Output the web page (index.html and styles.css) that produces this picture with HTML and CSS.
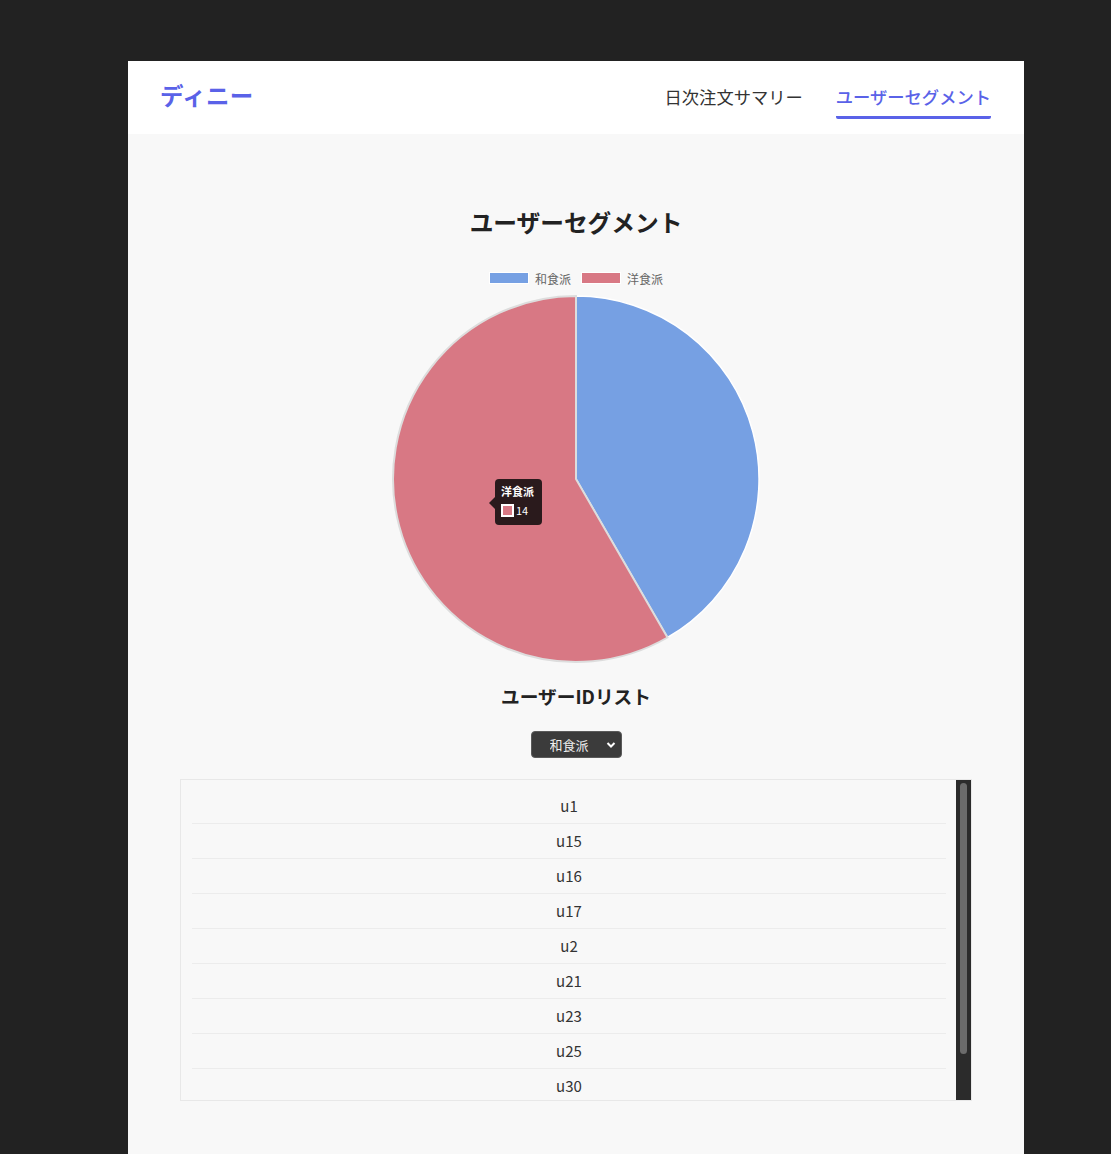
FILE: index.html
```html
<!DOCTYPE html>
<html lang="ja">
<head>
<meta charset="utf-8">
<title>ディニー - ユーザーセグメント</title>
<link rel="stylesheet" href="styles.css">
</head>
<body>
<div class="app">
  <header class="header">
    <div class="logo">ディニー</div>
    <nav class="nav">
      <a class="nav-item">日次注文サマリー</a>
      <a class="nav-item active">ユーザーセグメント</a>
    </nav>
  </header>
  <main class="main">
    <h2 class="title">ユーザーセグメント</h2>
    <div class="legend">
      <span class="legend-box blue"></span><span class="legend-label">和食派</span>
      <span class="legend-box red"></span><span class="legend-label">洋食派</span>
    </div>
    <div class="chart">
      <svg class="pie" width="370" height="370" viewBox="0 0 370 370">
        <path d="M185 185 L185 2 A183 183 0 0 1 276.5 343.5 Z" fill="#76a0e3" stroke="#ffffff" stroke-width="1.5"/>
        <path d="M185 185 L276.5 343.5 A183 183 0 1 1 185 2 Z" fill="#d87884" stroke="#dddddd" stroke-width="2"/>
      </svg>
      <div class="tooltip">
        <div class="tooltip-title">洋食派</div>
        <div class="tooltip-body"><span class="tooltip-swatch"></span>14</div>
      </div>
    </div>
    <h3 class="subtitle">ユーザーIDリスト</h3>
    <div class="select-wrap">
      <select class="select">
        <option>和食派</option>
        <option>洋食派</option>
      </select>
      <svg class="chevron" width="10" height="8" viewBox="0 0 10 8"><path d="M1.5 2 L5 5.5 L8.5 2" fill="none" stroke="#fff" stroke-width="2"/></svg>
    </div>
    <div class="list">
      <div class="list-scroll">
        <ul class="user-list">
          <li>u1</li>
          <li>u15</li>
          <li>u16</li>
          <li>u17</li>
          <li>u2</li>
          <li>u21</li>
          <li>u23</li>
          <li>u25</li>
          <li>u30</li>
          <li>u8</li>
        </ul>
      </div>
      <div class="scrollbar"><div class="scrollbar-thumb"></div></div>
    </div>
  </main>
</div>
</body>
</html>
```
FILE: styles.css
```css
html, body {
  margin: 0;
  padding: 0;
  background: #222222;
  font-family: "Noto Sans CJK JP", "Noto Sans", sans-serif;
}
.app {
  width: 896px;
  margin: 61px 0 0 128px;
}
.header {
  height: 73px;
  background: #ffffff;
  display: flex;
  align-items: center;
  justify-content: space-between;
  padding: 0 33px 0 32px;
}
.logo {
  font-size: 23.5px;
  font-weight: 700;
  color: #5a62e8;
  letter-spacing: 0.3px;
  margin-bottom: 6px;
}
.nav {
  display: flex;
  gap: 33px;
  padding-top: 8px;
}
.nav-item {
  font-size: 17.3px;
  color: #333333;
  line-height: 26px;
  padding-bottom: 6px;
  border-bottom: 3px solid transparent;
  cursor: pointer;
}
.nav-item.active {
  color: #5a62e8;
  font-weight: 500;
  border-bottom-color: #5a62e8;
  border-radius: 2px;
}
.main {
  background: #f8f8f8;
  padding: 70px 52px 60px 52px;
  min-height: 1000px;
  display: flex;
  flex-direction: column;
  align-items: center;
}
.title {
  margin: 0;
  font-size: 23.7px;
  line-height: 36px;
  font-weight: 700;
  color: #222222;
}
.legend {
  margin-top: 30px;
  height: 16px;
  display: flex;
  align-items: center;
  font-size: 12px;
  color: #666666;
}
.legend-box {
  width: 38px;
  height: 10px;
  border: 1px solid #ffffff;
  margin-right: 6px;
}
.legend-box.blue { background: #76a0e3; }
.legend-box.red { background: #d87884; margin-left: 10px; }
.chart {
  position: relative;
  width: 370px;
  height: 370px;
  margin-top: 8px;
}
.pie { display: block; }
.tooltip {
  position: absolute;
  left: 104px;
  top: 185px;
  width: 47px;
  height: 46px;
  box-sizing: border-box;
  background: #2a1a1c;
  border-radius: 4px;
  color: #ffffff;
  padding: 4px 6px;
  font-size: 11px;
}
.tooltip::before {
  content: "";
  position: absolute;
  left: -6px;
  top: 18px;
  border-top: 6px solid transparent;
  border-bottom: 6px solid transparent;
  border-right: 6px solid #2a1a1c;
}
.tooltip-title {
  font-weight: 700;
  line-height: 16px;
}
.tooltip-body {
  display: flex;
  align-items: center;
  margin-top: 4px;
  line-height: 14px;
}
.tooltip-swatch {
  width: 9px;
  height: 9px;
  background: #d87884;
  border: 2px solid #ffffff;
  margin-right: 2px;
}
.subtitle {
  margin: 18px 0 0 0;
  font-size: 18.7px;
  line-height: 28px;
  font-weight: 700;
  color: #222222;
}
.select-wrap {
  position: relative;
  margin-top: 21px;
}
.select {
  appearance: none;
  -webkit-appearance: none;
  width: 91px;
  height: 27px;
  background: #3b3b3b;
  color: #eeeeee;
  border: 1px solid #5a5a5a;
  border-radius: 4px;
  font-family: "Noto Sans CJK JP", sans-serif;
  font-size: 13px;
  padding: 0 0 0 18px;
  display: block;
}
.chevron {
  position: absolute;
  right: 6px;
  top: 10px;
  pointer-events: none;
}
.list {
  margin-top: 21px;
  width: 790px;
  height: 320px;
  border: 1px solid #e8e8e8;
  display: flex;
}
.list-scroll {
  flex: 1;
  overflow: hidden;
}
.scrollbar {
  width: 15px;
  background: #2b2b2b;
  padding: 3px 4px;
  box-sizing: border-box;
}
.scrollbar-thumb {
  height: 271px;
  background: #6b6b6b;
  border-radius: 4px;
}
.user-list {
  list-style: none;
  margin: 0;
  padding: 9px 10px 9px 11px;
}
.user-list li {
  height: 34px;
  line-height: 34px;
  text-align: center;
  font-size: 15px;
  color: #333333;
  border-bottom: 1px solid #ececec;
}
.user-list li:last-child {
  border-bottom: none;
}
```
